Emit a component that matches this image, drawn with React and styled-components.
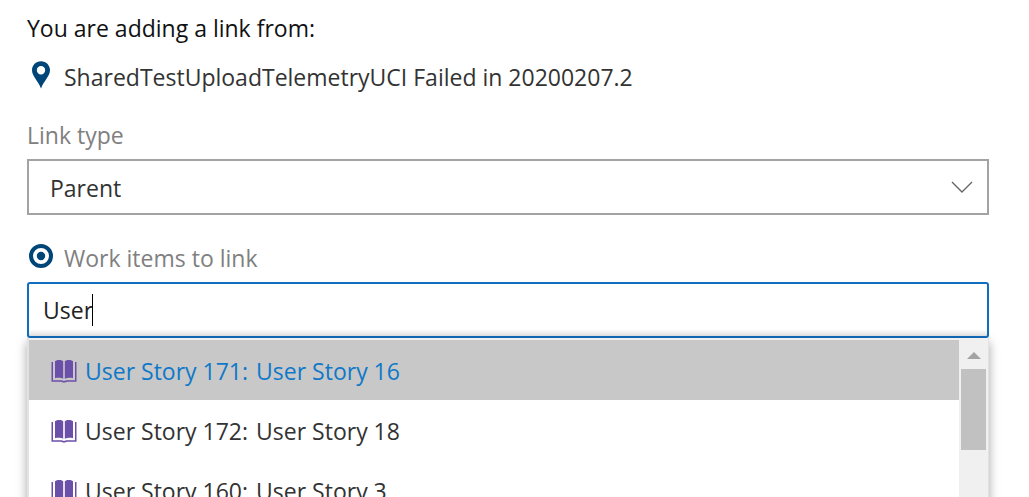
import React, { useState } from "react";
import styled, { createGlobalStyle } from "styled-components";

const GlobalStyle = createGlobalStyle`
  *, *::before, *::after { box-sizing: border-box; }
  html, body { margin: 0; background: #fff; }
  body {
    height: 100vh;
    overflow: hidden;
    font-family: "Segoe UI", "Open Sans", "Noto Sans", sans-serif;
    font-size: 23px;
    line-height: 32px;
    color: #333;
  }
`;

const Form = styled.form`
  display: flex;
  flex-direction: column;
  padding: 12px 40px 0 27px;
`;

const Intro = styled.p`
  margin: 0;
  color: #111;
`;

const Source = styled.div`
  display: flex;
  align-items: center;
  margin: 17px 0 26px;
  svg { flex: none; margin: 0 10px 4px 0; }
`;

const Label = styled.label`
  display: flex;
  align-items: center;
  margin-bottom: 8px;
  color: #808080;
  svg { flex: none; margin: 0 10px 4px 0; }
`;

const SelectBox = styled.div`
  display: grid;
  align-items: center;
  margin-bottom: 27px;
  > * { grid-area: 1 / 1; }
  svg { justify-self: end; margin-right: 16px; pointer-events: none; }
`;

const Select = styled.select`
  appearance: none;
  width: 100%;
  height: 56px;
  padding: 2px 50px 0 21px;
  border: 2px solid #a3a3a3;
  border-radius: 0;
  background: #fff;
  color: #333;
  font: inherit;
  outline: none;
`;

const Combo = styled.div`
  position: relative;
`;

const Field = styled.div`
  display: flex;
  align-items: center;
  height: 56px;
  padding: 0 14px;
  border: 2px solid #106ebe;
  border-radius: 3px;
  background: linear-gradient(to top, #e6e6e6, #fff 7px);
`;

const Input = styled.input`
  field-sizing: content;
  min-width: 1px;
  max-width: 100%;
  padding: 0;
  border: 0;
  outline: none;
  background: transparent;
  caret-color: transparent;
  color: #222;
  font: inherit;
`;

const Caret = styled.span`
  width: 1px;
  height: 32px;
  margin-left: -1px;
  background: #000;
`;

const Popup = styled.div`
  position: absolute;
  top: 100%;
  left: 0;
  right: 0;
  display: flex;
  height: 304px;
  padding-top: 2px;
  border-left: 2px solid #e2e2e2;
  border-right: 1px solid #e2e2e2;
  background: #f0f0f0;
  box-shadow: 0 4px 10px rgba(0, 0, 0, 0.35);
`;

const Options = styled.ul`
  flex: 1;
  margin: 0;
  padding: 0;
  overflow: hidden;
  list-style: none;
  background: #fff;
`;

const Option = styled.li`
  display: flex;
  align-items: center;
  height: 60px;
  padding: 2px 22px 0;
  background: ${(p) => (p.$active ? "#c8c8c8" : "#fff")};
  color: ${(p) => (p.$active ? "#0f78c8" : "#333")};
  white-space: pre;
  svg { flex: none; margin-right: 8px; }
`;

const ItemId = styled.span`
  margin-right: 8px;
`;

const ScrollTrack = styled.div`
  display: flex;
  flex-direction: column;
  align-items: center;
  width: 29px;
  background: #f0f0f0;
  svg { flex: none; margin: 12px 0 10px; }
`;

const ScrollThumb = styled.div`
  width: 25px;
  height: 81px;
  background: #c1c1c1;
`;

const PinIcon = () => (
  <svg width="27" height="28" viewBox="0 0 27 28" aria-hidden="true">
    <path
      fill="#004578"
      fillRule="evenodd"
      d="M14 0.2C8.9 0.2 5 4.200 5 9.100C5 15.400 10.500 18.800 14 27.500C17.500 18.800 23 15.400 23 9.100C23 4.200 19.100 0.200 14 0.200ZM14 5A4.200 4.200 0 1 1 14 13.400A4.200 4.200 0 1 1 14 5Z"
    />
  </svg>
);

const TargetIcon = () => (
  <svg width="27" height="26" viewBox="0 0 27 26" aria-hidden="true">
    <circle cx="14" cy="13" r="10" fill="none" stroke="#004578" strokeWidth="4" />
    <circle cx="14" cy="13" r="4.200" fill="#004578" />
  </svg>
);

const ChevronIcon = () => (
  <svg width="22" height="12" viewBox="0 0 22 12" aria-hidden="true">
    <path d="M1 1L11 11L21 1" fill="none" stroke="#666" strokeWidth="1.400" />
  </svg>
);

const BookIcon = () => (
  <svg width="26" height="24" viewBox="0 0 26 24" aria-hidden="true">
    <g fill="#6b4fa8">
      <path d="M4 2.300C6 0.700 10 0.500 12.200 2.200V19.800C10 18.600 6.500 18.600 4 19.300Z" />
      <path d="M13.800 2.200C16 0.500 20 0.700 22 2.300V19.300C19.500 18.600 16 18.600 13.800 19.800Z" />
      <path d="M0.500 3H2V21.200H10.500L13 22L15.500 21.200H24V3H25.500V22.700H15.800C15 23.600 11 23.600 10.200 22.700H0.500Z" />
    </g>
  </svg>
);

const UpArrow = () => (
  <svg width="14" height="7" viewBox="0 0 14 7" aria-hidden="true">
    <path d="M0 7L7 0L14 7Z" fill="#a3a3a3" />
  </svg>
);

const stories = [
  { id: 171, title: "User Story 16" },
  { id: 172, title: "User Story 18" },
  { id: 160, title: "User Story 3" },
];

export default function App() {
  const [query, setQuery] = useState("User");
  const [linkType, setLinkType] = useState("Parent");

  return (
    <>
      <GlobalStyle />
      <Form onSubmit={(e) => e.preventDefault()}>
        <Intro>You are adding a link from:</Intro>
        <Source>
          <PinIcon />
          SharedTestUploadTelemetryUCI Failed in 20200207.2
        </Source>

        <Label htmlFor="link-type">Link type</Label>
        <SelectBox>
          <Select id="link-type" value={linkType} onChange={(e) => setLinkType(e.target.value)}>
            <option>Parent</option>
          </Select>
          <ChevronIcon />
        </SelectBox>

        <Label htmlFor="work-items">
          <TargetIcon />
          Work items to link
        </Label>
        <Combo>
          <Field>
            <Input
              id="work-items"
              type="text"
              role="combobox"
              aria-expanded="true"
              aria-controls="work-item-options"
              autoComplete="off"
              value={query}
              onChange={(e) => setQuery(e.target.value)}
            />
            <Caret />
          </Field>
          <Popup>
            <Options id="work-item-options" role="listbox" aria-label="Work items">
              {stories.map((story, i) => (
                <Option key={story.id} role="option" aria-selected={i === 0} $active={i === 0}>
                  <BookIcon />
                  <ItemId>User Story {story.id}:</ItemId>
                  <span>{story.title}</span>
                </Option>
              ))}
            </Options>
            <ScrollTrack aria-hidden="true">
              <UpArrow />
              <ScrollThumb />
            </ScrollTrack>
          </Popup>
        </Combo>
      </Form>
    </>
  );
}
